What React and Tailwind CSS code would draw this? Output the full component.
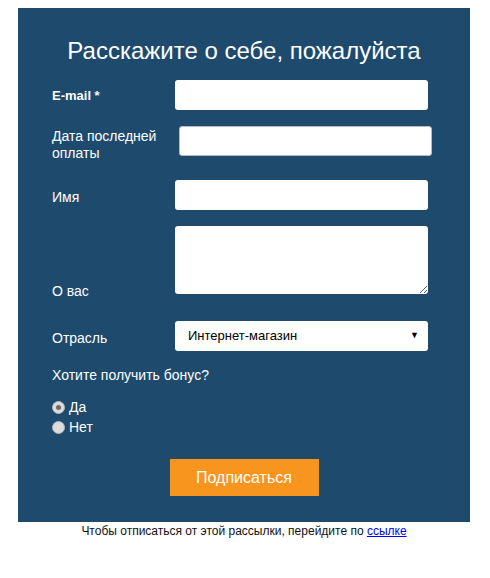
import React from 'react';

const LABEL = 'text-white text-[14px] leading-[16px]';
const FIELD = 'bg-white rounded-[3px] outline-none';

function Radio({ checked, label }) {
  return (
    <label className="flex items-center h-[20px] gap-[4px] text-white text-[14px]">
      <span className="w-[13px] h-[13px] rounded-full bg-[#dcdcdc] border border-[#b5b5b5] flex items-center justify-center">
        {checked && <span className="w-[5px] h-[5px] rounded-full bg-[#6b6b6b]" />}
      </span>
      <span>{label}</span>
    </label>
  );
}

export default function App() {
  return (
    <div className="w-[490px] h-[578px] bg-white font-['Liberation_Sans',Arial,sans-serif]">
      <div className="pt-2 pl-[18px]">
        <div className="w-[452px] bg-[#1d4a6d] pt-[29px] pb-[26px] pl-[34px]">
          <h1 className="text-white text-[24px] leading-[27px] text-center pr-[34px]">
            Расскажите о себе, пожалуйста
          </h1>

          <div className="mt-[16px] flex items-center">
            <span className="w-[123px] text-white text-[13px] font-bold pt-[2px]">E-mail *</span>
            <input className={`${FIELD} w-[253px] h-[30px]`} />
          </div>

          <div className="mt-[16px] flex items-start">
            <span className={`${LABEL} w-[127px] pt-[2px] leading-[17px]`}>
              Дата последней оплаты
            </span>
            <input className={`${FIELD} w-[253px] h-[30px] border border-[#b8bcc2]`} />
          </div>

          <div className="mt-[18px] flex items-center">
            <span className={`${LABEL} w-[123px] pt-[3px]`}>Имя</span>
            <input className={`${FIELD} w-[253px] h-[30px]`} />
          </div>

          <div className="mt-[16px] flex items-start">
            <span className={`${LABEL} w-[123px] pt-[57px]`}>О вас</span>
            <textarea className={`${FIELD} w-[253px] h-[68px] block`} />
          </div>

          <div className="mt-[22px] flex items-center">
            <span className={`${LABEL} w-[123px] pt-[4px]`}>Отрасль</span>
            <div className={`${FIELD} w-[253px] h-[30px] flex items-center justify-between pl-[13px] pr-[9px] text-[13px] text-black`}>
              <span>Интернет-магазин</span>
              <span className="text-[9px]">▼</span>
            </div>
          </div>

          <div className={`${LABEL} mt-[16px]`}>Хотите получить бонус?</div>

          <div className="mt-[14px] flex flex-col">
            <Radio checked label="Да" />
            <Radio label="Нет" />
          </div>

          <div className="mt-[22px] flex justify-center pr-[34px]">
            <button className="w-[149px] h-[37px] bg-[#f7951f] text-white text-[16px]">
              Подписаться
            </button>
          </div>
        </div>

        <div className="w-[452px] pt-[2px] text-center text-[12px] leading-[14px] text-[#111]">
          Чтобы отписаться от этой рассылки, перейдите по{' '}
          <a href="#" className="text-[#0000ee] underline">ссылке</a>
        </div>
      </div>
    </div>
  );
}
